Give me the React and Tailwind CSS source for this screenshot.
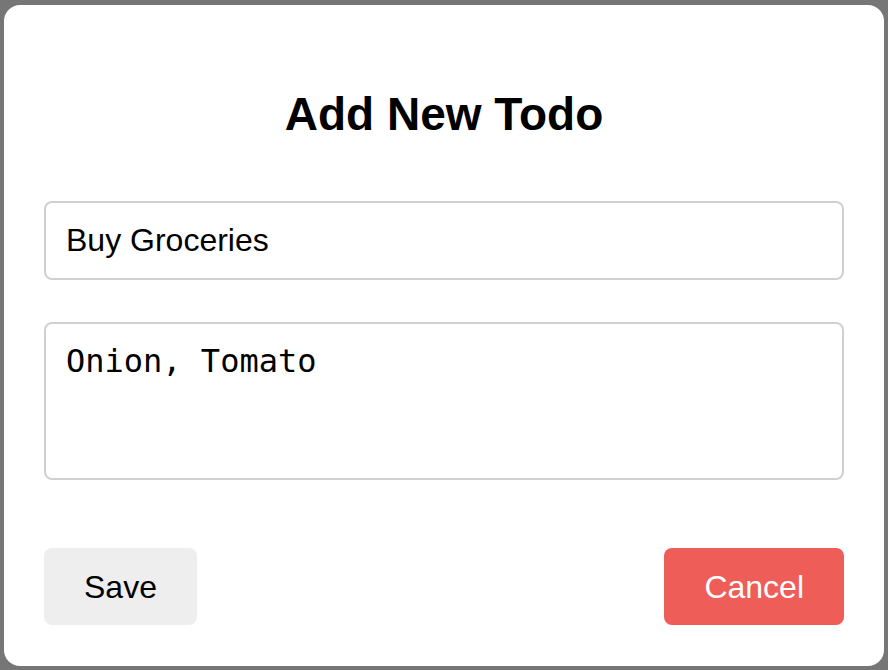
import React from 'react';

const App = () => {
  return (
    <div className="w-[888px] h-[670px] bg-[#767676] pt-[5px] pb-[4px] px-[4px] flex">
      <div
        className="flex-1 bg-white rounded-[16px] px-[40px] pt-[83px] pb-[41px] flex flex-col"
        style={{ fontFamily: '"Liberation Sans", Arial, sans-serif' }}
      >
        <h2 className="text-[46px] leading-[53px] font-bold text-black text-center">Add New Todo</h2>

        <input
          type="text"
          defaultValue="Buy Groceries"
          className="mt-[60px] h-[79px] w-full border-2 border-[#d0d0d0] rounded-[8px] px-[20px] text-[32px] text-black outline-none"
        />

        <textarea
          defaultValue="Onion, Tomato"
          className="mt-[42px] h-[158px] w-full border-2 border-[#d0d0d0] rounded-[8px] px-[20px] py-[19px] text-[32px] leading-[37px] text-black outline-none resize-none"
          style={{ fontFamily: '"DejaVu Sans Mono", monospace' }}
        />

        <div className="mt-auto flex justify-between">
          <button className="h-[77px] px-[40px] bg-[#eeeeee] rounded-[8px] text-[32px] text-black">Save</button>
          <button className="h-[77px] px-[40px] bg-[#ee5d58] rounded-[8px] text-[32px] text-white">Cancel</button>
        </div>
      </div>
    </div>
  );
};

export default App;
